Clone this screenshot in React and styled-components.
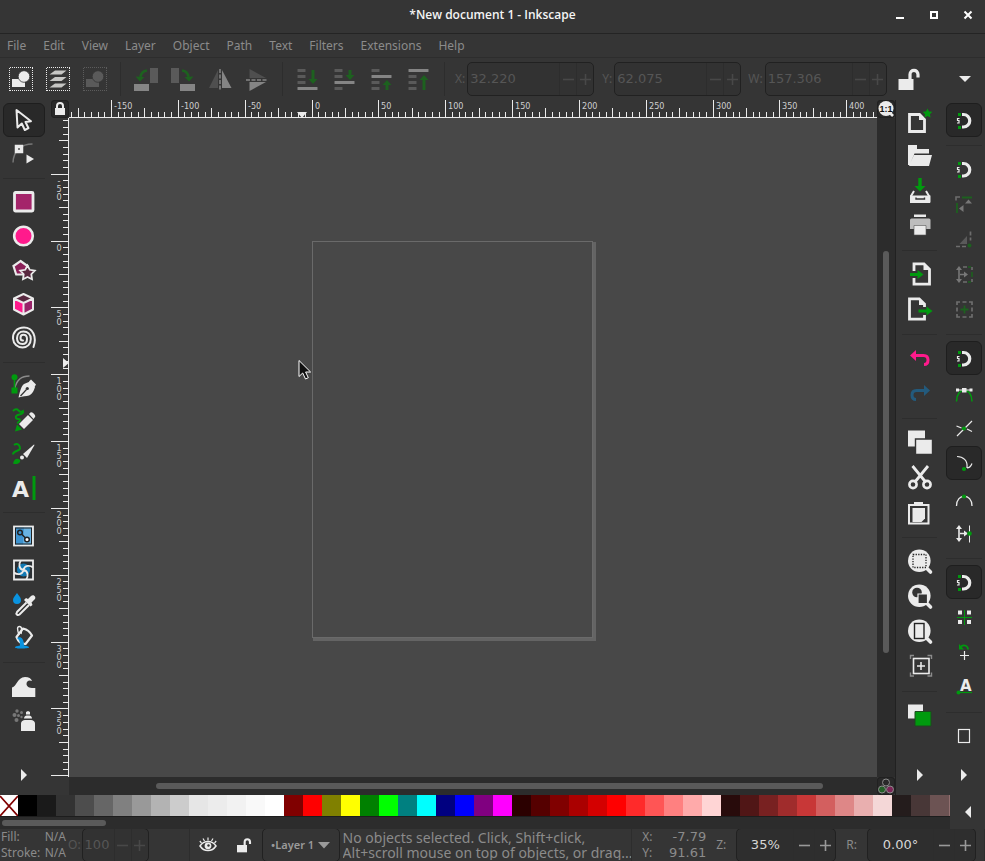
import React, { useLayoutEffect, useRef, useState } from "react";
import styled, { createGlobalStyle, css } from "styled-components";

const c = {
  chrome: "#353535",
  trough: "#2c2c2c",
  edge: "#212121",
  line: "#2d2d2d",
  canvas: "#484848",
  ink: "#ebebeb",
  text: "#8b8b8b",
  off: "#565656",
  green: "#009a0e",
  greenOff: "#1d611f",
  pink: "#ff1a8c",
  blue: "#0a93e0",
};
const ui = '"Noto Sans", "Open Sans", sans-serif';
const wide = '"DejaVu Sans", sans-serif';

const Global = createGlobalStyle`
  *, *::before, *::after { box-sizing: border-box; }
  body { margin: 0; background: ${c.chrome}; overflow: hidden; }
  button, input { font: inherit; color: inherit; margin: 0; padding: 0; border: 0; background: none; }
  svg { display: block; flex: none; }
`;

const Window = styled.div`
  display: flex;
  flex-direction: column;
  height: 100vh;
  background: ${c.chrome};
  color: ${c.text};
  font: 12px/16px ${ui};
`;

const TitleBar = styled.header`
  display: grid;
  grid-template-columns: 1fr auto 1fr;
  align-items: center;
  height: 34px;
  padding-bottom: 3px;
  border-bottom: 1px solid #242424;
  color: #f4f4f4;
`;
const Title = styled.h1`
  grid-column: 2;
  margin: 0;
  font: 600 12px/16px "Open Sans", ${ui};
`;
const WindowButtons = styled.div`
  display: flex;
  justify-content: flex-end;
`;
const WindowButton = styled.button`
  display: grid;
  place-items: center;
  width: 34px;
  height: 30px;
`;
const MenuBar = styled.nav`
  display: flex;
  align-items: center;
  gap: 17px;
  height: 24px;
  padding: 0 7px;
  border-bottom: 1px solid ${c.line};
`;
const MenuItem = styled.button`
  font-size: 12px;
  line-height: 16px;
`;
const OptionBar = styled.div`
  display: flex;
  align-items: center;
  height: 42px;
  padding-left: 2px;
`;
const OptionButton = styled.button`
  display: grid;
  place-items: center;
  flex: none;
  width: 37px;
  height: 34px;
`;
const BarRule = styled.div`
  flex: none;
  width: 1px;
  height: 34px;
  margin: 0 6px 0 7px;
  background: ${c.line};
`;
const Field = styled.label`
  display: flex;
  align-items: center;
  flex: none;
  gap: ${(p) => p.$gap || 2}px;
  margin-left: ${(p) => p.$left || 0}px;
  color: ${(p) => (p.$off ? c.off : c.text)};
`;
const SpinBox = styled.span`
  display: flex;
  width: ${(p) => p.$width}px;
  height: 34px;
  border: 1px solid ${c.edge};
  border-radius: 5px;
  background: ${(p) => (p.$off ? "#323232" : "#2e2e2e")};
  color: ${(p) => (p.$off ? c.off : "#d6d6d6")};
  font: 13px/16px ${wide};
`;
const SpinInput = styled.input`
  flex: 1;
  min-width: 0;
  padding: 0 2px;
  text-align: ${(p) => p.$align || "left"};
  outline: 0;
`;
const SpinStep = styled.button`
  display: grid;
  place-items: center;
  width: ${(p) => p.$step}px;
  border-left: 1px solid ${c.line};
  color: ${(p) => (p.$off ? "#484848" : "#999")};
`;
const MoreButton = styled.button`
  display: grid;
  place-items: center;
  width: 40px;
  height: 34px;
  margin-left: auto;
`;

const Main = styled.main`
  display: flex;
  flex: 1;
  min-height: 0;
`;
const ToolColumn = styled.div`
  display: flex;
  flex-direction: column;
  flex: none;
  width: ${(p) => p.$width}px;
  padding: ${(p) => p.$pad};
`;
const ToolButton = styled.button`
  display: grid;
  place-items: center;
  flex: none;
  height: 34px;
  margin-bottom: ${(p) => p.$gap}px;
  border: 1px solid transparent;
  border-radius: 6px;
  ${(p) =>
    p.$on &&
    css`
      background: #292929;
      border-color: #1e1e1e;
    `}
`;
const ColumnRule = styled.div`
  flex: none;
  height: 1px;
  margin: 7px 0 6px;
  background: ${c.line};
`;
const ExpandButton = styled.button`
  display: grid;
  place-items: center;
  height: 30px;
  margin: auto 0 5px;
`;

const Editor = styled.section`
  display: grid;
  flex: 1;
  min-width: 0;
  grid-template-columns: 18px 1fr 18px;
  grid-template-rows: 18px 1fr 18px;
  border-right: 1px solid ${c.edge};
`;
const CornerButton = styled.button`
  display: grid;
  place-items: center;
  border-radius: 4px;
  background: #292929;
  box-shadow: inset 0 0 0 1px ${c.edge};
`;
const RulerTop = styled.div`
  min-width: 0;
  overflow: hidden;
  border-bottom: 1px solid ${c.ink};
`;
const RulerLeft = styled.div`
  min-height: 0;
  overflow: hidden;
  border-right: 1px solid ${c.ink};
`;
const RulerText = styled.text`
  font: 9px "DejaVu Sans Condensed", "DejaVu Sans", sans-serif;
  fill: #cfcfcf;
`;
const Canvas = styled.div`
  position: relative;
  overflow: hidden;
  background: ${c.canvas};
`;
const Page = styled.div`
  position: absolute;
  left: 243px;
  top: 123px;
  width: 281px;
  height: 397px;
  border: 1px solid #6a6a6a;
  box-shadow: 2px 2px 0 1px #646464;
  background: ${c.canvas};
`;
const Pointer = styled.svg`
  position: absolute;
  left: 229px;
  top: 241px;
`;
const ScrollY = styled.div`
  display: flex;
  justify-content: center;
  background: ${c.trough};
`;
const ThumbY = styled.div`
  width: 6px;
  height: 61%;
  margin-top: 133px;
  border-radius: 3px;
  background: #5a5a5a;
`;
const ScrollX = styled.div`
  display: flex;
  align-items: center;
  background: ${c.trough};
`;
const ThumbX = styled.div`
  width: ${(p) => p.$width};
  height: 6px;
  margin-left: ${(p) => p.$left}px;
  border-radius: 3px;
  background: #5a5a5a;
`;
const PaletteBar = styled.div`
  display: flex;
`;
const PaletteArea = styled.div`
  flex: 1;
  min-width: 0;
`;
const Swatches = styled.div`
  display: flex;
  height: 22px;
  overflow: hidden;
  border-bottom: 1px solid #1d1d1d;
`;
const Swatch = styled.button`
  flex: none;
  width: ${(p) => (p.$none ? 18 : 19)}px;
  background: ${(p) => p.$color};
`;
const PaletteScroll = styled(ScrollX)`
  height: 12px;
`;
const PaletteMenu = styled.button`
  display: grid;
  place-items: center;
  width: 35px;
`;

const StatusBar = styled.footer`
  display: flex;
  align-items: center;
  height: 32px;
  overflow: hidden;
  font-size: 12px;
`;
const Pair = styled.dl`
  display: grid;
  grid-template-columns: auto 1fr;
  flex: none;
  width: ${(p) => p.$width}px;
  margin: 0 0 0 ${(p) => p.$left}px;
  line-height: 16px;
`;
const Term = styled.dt``;
const Value = styled.dd`
  margin: 0;
  text-align: right;
  font-family: ${(p) => (p.$wide ? wide : ui)};
  font-size: ${(p) => (p.$wide ? 13 : 12)}px;
`;
const StatusRule = styled.div`
  flex: none;
  width: 1px;
  height: 32px;
  margin-left: ${(p) => p.$left}px;
  background: ${c.line};
`;
const StatusButton = styled.button`
  display: grid;
  place-items: center;
  flex: none;
  width: 36px;
  height: 32px;
`;
const LayerButton = styled.button`
  display: flex;
  align-items: center;
  justify-content: center;
  gap: 4px;
  flex: none;
  width: 78px;
  height: 34px;
  border: 1px solid ${c.edge};
  border-radius: 5px;
  font: 600 11px/16px ${ui};
  color: #9a9a9a;
`;
const Message = styled.p`
  flex: 1;
  min-width: 0;
  margin: 0 0 0 3px;
  overflow: hidden;
  white-space: nowrap;
  font: 14px/15px ${ui};
`;

const Icon = ({ children, w = 24, h = 24, ...rest }) => (
  <svg width={w} height={h} viewBox={`0 0 ${w} ${h}`} fill="none" aria-hidden="true" {...rest}>
    {children}
  </svg>
);
const W = c.ink;
const G = c.green;
const GO = c.greenOff;
const D = "#5a5a5a";
const L = "#858585";

/* ---- option bar ---- */
const Dots = ({ color }) => (
  <path d="M1 .5h23M1 23.5h23M.5 1v23M23.5 1v23" stroke={color} strokeWidth="1" strokeDasharray="1 1" />
);
const SelectAll = ({ color = W, body = W }) => (
  <Icon>
    <Dots color={color} />
    <path d="M3 12h13v8H3z" fill={body} />
    <circle cx="15" cy="9.500" r="5.800" fill={body} stroke={c.chrome} strokeWidth=".8" />
  </Icon>
);
const SelectLayers = () => (
  <Icon>
    <Dots color={W} />
    <path d="M9 3.500h11.500l-5 4H3.500zM9 10h11.500l-5 4H3.500zM9 16.500h11.500l-5 4H3.500z" fill="#c6c6c4" />
  </Icon>
);
const RotateIcon = ({ flip }) => (
  <Icon>
    <g transform={flip ? "translate(24 0) scale(-1 1)" : undefined}>
      <path d="M16 1h8v15h-8z" fill={D} />
      <path d="M0 17h15v7H0z" fill={L} />
      <path d="M13 3.500C9 4 7 6 6.500 10" stroke={GO} strokeWidth="2.600" />
      <path d="M1.500 9.500l9 .5-4.500 4.500z" fill={GO} />
    </g>
  </Icon>
);
const FlipH = () => (
  <Icon>
    <path d="M1 21L10 3v18z" fill="#4f4f4f" />
    <path d="M23.500 21L14 3v18z" fill={L} />
    <path d="M12 2v22" stroke={L} strokeWidth="1.500" strokeDasharray="4 1.500" />
  </Icon>
);
const FlipV = () => (
  <Icon>
    <path d="M4.500 2v9H21z" fill="#4f4f4f" />
    <path d="M4.500 24v-9H21z" fill={L} />
    <path d="M1 13h22" stroke={L} strokeWidth="1.500" strokeDasharray="4 1.500" />
  </Icon>
);
const Order = ({ at, y1, y2 }) => {
  const dir = y2 > y1 ? 1 : -1;
  return (
    <Icon>
      {[0, 1, 2, 3].map((i) => (
        <rect key={i} x="1.500" y={2 + i * 6} width={i === at ? 20 : 8} height={3} rx=".5" fill={i === at ? L : D} />
      ))}
      <path d={`M17 ${y1}V${y2 - dir * 3}`} stroke={GO} strokeWidth="3" />
      <path d={`M12.500 ${y2 - dir * 5}h9L17 ${y2}z`} fill={GO} />
    </Icon>
  );
};
const OpenLock = ({ size = 24 }) => (
  <svg width={size} height={size} viewBox="0 0 24 24" fill="none" aria-hidden="true">
    <path d="M1.500 12h15v11h-15z" fill={W} />
    <path d="M13 12V7.500c0-5.500 8-5.500 8 0v3" stroke={W} strokeWidth="3.200" />
  </svg>
);
const ClosedLock = () => (
  <Icon w={14} h={16}>
    <path d="M2 7h10v7H2z" fill={W} />
    <path d="M4 7V5c0-4 6-4 6 0v2" stroke={W} strokeWidth="2" />
  </Icon>
);
const Triangle = ({ dir = "right" }) => (
  <Icon w={12} h={12}>
    <path d={{ right: "M3 0l6 6-6 6z", left: "M9 0L3 6l6 6z", down: "M0 3h12L6 9z" }[dir]} fill={W} />
  </Icon>
);

/* ---- tool box ---- */
const tools = [
  [
    ["Selector", <path d="M4.500 2l1 17.500 4.300-4 3 6.500 3.700-1.800-3-6.200 5.500-.8z" stroke={W} strokeWidth="2" strokeLinejoin="round" />],
    ["Node", <>
      <path d="M20.500 2C10 2 1.500 8 1 20.500" stroke="#777" strokeWidth="1.500" />
      <path d="M4.500 4.500h5v5h-5z" fill="#222" stroke={W} strokeWidth="3.500" />
      <path d="M14.500 12.500l7.500 4.500-7.500 4.500z" fill={W} />
    </>],
  ],
  [
    ["Rectangle", <rect x="2.500" y="2.500" width="18.500" height="18.500" rx="1" fill="#a4246a" stroke={W} strokeWidth="2.800" />],
    ["Ellipse", <circle cx="11.500" cy="12" r="9.300" fill={c.pink} stroke={W} strokeWidth="2.600" />],
    ["Star", <>
      <path d="M8.500 3l7 5-2.700 8.500H4.200L1.500 8z" fill="#8c2059" stroke={W} strokeWidth="2.200" />
      <path d="M15.500 7.500l2.300 4.300 5 .9-3.500 3.500.7 5-4.500-2.300-4.500 2.300.7-5-3.500-3.500 5-.9z" fill="#592940" stroke={W} strokeWidth="1.800" />
    </>],
    ["3D box", <>
      <path d="M11.500 2L21 6.500v11L11.500 22.500 2 17.500v-11z" fill="#592940" />
      <path d="M2 6.500l9.500 4.500v11.500L2 17.500z" fill={c.pink} />
      <path d="M21 6.500L11.500 11v11.500L21 17.500z" fill="#99256a" />
      <path d="M11.500 2L21 6.500v11L11.500 22.500 2 17.500v-11zM2 6.500l9.500 4.500L21 6.500M11.500 11v11" stroke={W} strokeWidth="2" strokeLinejoin="round" />
    </>],
    ["Spiral", <path d="M21.500 21C25 11 21 1.500 12 1.500 4.500 1.500 .7 7 1 12.500c.4 5.500 4.500 9 9.500 9 5 0 8.300-3.500 8.300-8.500S15.500 5.500 11.500 5.500 5 8.500 5 12.300s2.500 5.700 5.500 5.700 4.500-2.300 4.500-5-1.500-4.200-3.700-4.200-2.800 1.600-2.800 3.200 1 2.500 2.500 2.500" stroke={W} strokeWidth="2" strokeLinecap="round" />],
  ],
  [
    ["Pen", <>
      <path d="M3 14C4.500 6 10 2 17.500 2" stroke="#8b8b8b" strokeWidth="1.400" />
      <path d="M2.500 3v12" stroke={G} strokeWidth="1.600" />
      <circle cx="2.500" cy="3.200" r="3" fill={G} />
      <path d="M-.5 13.500h6v6h-6z" fill={G} />
      <path d="M6.500 23.500C8 18 9 12 12 10l6-2.500L23 13c-1.500 5-3 7-6 8.500-3 1-6 .5-10.500 2z" fill={W} />
      <path d="M8.500 22l6-6.500" stroke="#333" strokeWidth="1.200" />
      <circle cx="15.300" cy="14.500" r="1.600" fill="#333" />
      <path d="M17 7.500l2-2 5 5-1.500 2.500z" fill={W} />
    </>],
    ["Pencil", <>
      <path d="M1 3c2-2 4-2 5.500-.5S9 4.500 11 3c1 2-1 3-3.500 3.500S3 8 4 10s4 0 4 2-2 1.500-2.500 3.500" stroke={G} strokeWidth="1.900" />
      <path d="M7 16l9-9 5 5-9 9z" fill={W} />
      <path d="M17 6l1.500-1.500c1.500-1.500 6 3 4.500 4.500L21.500 11z" fill={W} />
      <path d="M5 16.500l5 5-7 2z" fill={G} />
    </>],
    ["Brush", <>
      <path d="M2 3c4-3 6 1 6 3.500S1 8.500 1 12.500" stroke={G} strokeWidth="2" />
      <path d="M11 12L22 2.500l.5.500L15 16z" fill={W} />
      <circle cx="10" cy="15.500" r="2" fill={W} />
      <path d="M1 21.500C2 17 5 15.500 8 18c1 3-3 5-7 3.500z" fill={G} />
    </>],
    ["Text", <>
      <text x="0" y="21" fill={W} fontFamily="DejaVu Sans" fontWeight="700" fontSize="22">A</text>
      <path d="M20.500 0h3v24h-3z" fill={G} />
    </>],
  ],
  [
    ["Gradient", <>
      <path d="M2 2.500h19v19H2z" fill="#3e93cf" />
      <path d="M12 2.500h9v19H11z" fill="#69b3e2" />
      <rect x="2" y="2.500" width="19" height="19" stroke={W} strokeWidth="1.800" />
      <rect x="3.500" y="4" width="16" height="16" stroke="#222" />
      <path d="M8 8.500l7 7" stroke="#222" strokeWidth="1.400" />
      <circle cx="8" cy="8.500" r="2.300" fill="#3e93cf" stroke="#222" strokeWidth="1.500" />
      <circle cx="15" cy="15.500" r="2.300" fill="#fff" stroke="#222" strokeWidth="1.500" />
    </>],
    ["Mesh", <>
      <path d="M2 2.500h19v19H2z" fill="#2a2f33" />
      <circle cx="11.500" cy="12" r="6.500" fill={c.blue} opacity=".75" />
      <path d="M2 2.500h19v19H2zM11.500 12C6.500 11 6.500 5.500 9 2.500M11.500 12c5 1 5 6.500 2.500 9.500M11.500 12c1-5 6.500-5 9.500-2.500M11.500 12c-1 5-6.500 5-9.500 2.500" stroke={W} strokeWidth="1.800" />
    </>],
    ["Dropper", <>
      <path d="M5 1c2 3 4 4.500 4 7a4 4 0 0 1-8 0c0-2.500 2-4 4-7z" fill={c.blue} />
      <path d="M14.500 10.500L5 20c-1.500 2 .5 4 2.500 2.500l9.500-9.500" stroke={W} strokeWidth="2" />
      <path d="M12 8l2-2 2 1 3-3c2.500-2.500 6 1 3.500 3.500l-3 3 1 2.500-2 1.500z" fill={W} />
    </>],
    ["Paint bucket", <>
      <path d="M11 2.500c4 1 7 3 9 7l-6.500 8.500C9 18 6 15 4.500 11z" stroke={W} strokeWidth="2.200" strokeLinejoin="round" />
      <path d="M7 9C5 3 5 .5 7.500 .5S10 4 9 8" stroke={W} strokeWidth="1.400" />
      <path d="M5 12c3-2 7-.5 7 7.500 3 .3 5 .8 5 2s-14 1.500-14 0c0-1 2-1.500 5-2 0-4-1-6-3-7.500z" fill={c.blue} />
    </>],
  ],
  [
    ["Tweak", <path d="M0 23V13.500c5-1 5-10 13-10.500 4 0 6 1.500 7 4-3-1.500-5.500 0-5.500 3 0 2.500 3 4.500 8.800 4v9z" fill={W} />],
    ["Spray", <>
      <path d="M9 23V15.500c0-2 2-3.500 4-3.500h6c2 0 4 1.500 4 3.500V23zM12 10.500c0-2.500 2-3 4-3s4 .5 4 3zM14 6.500V4l2-1 2 1v2.500z" fill={W} />
      <g fill="#777">
        <circle cx="5" cy="3" r="1.700" /><circle cx="2.500" cy="7" r="2" /><circle cx="6.500" cy="7.500" r="1.500" />
        <circle cx="4.500" cy="12" r="2" /><circle cx="9.500" cy="4.500" r="1.500" /><circle cx="9.500" cy="9" r="1.200" />
      </g>
    </>],
  ],
];

/* ---- command column ---- */
const Lens = ({ children }) => (
  <>
    <path d="M18 18.500l4.500 4.500" stroke={W} strokeWidth="3.600" strokeLinecap="round" />
    <circle cx="11.300" cy="11.800" r="11.300" fill={W} />
    {children}
  </>
);
const commands = [
  [
    ["New", <>
      <path d="M1.500 6.500h10l5 5v12h-15z" stroke={W} strokeWidth="2.800" />
      <path d="M11 6v6h6z" fill={W} />
      <path d="M19.500 .5l1.500 3 3.300.3-2.400 2.400.7 3.300-3.100-1.600-3.100 1.600.7-3.300-2.400-2.400 3.300-.3z" fill={G} />
    </>],
    ["Open", <path d="M0 2h9v4h12v4.500H6.500L1.500 22H0zM6 12h18l-3 11H1z" fill={W} />],
    ["Save", <>
      <path d="M12 0v9" stroke={G} strokeWidth="3.400" />
      <path d="M6.500 8h11L12 13.500z" fill={G} />
      <path d="M6 13L3 18v6h18v-6l-3-5" stroke={W} strokeWidth="2" />
      <path d="M2 17.500h20.500v7H2z" fill={W} />
      <path d="M8 19.500v1.500h8.500v-1.500" stroke="#333" strokeWidth="1.400" />
    </>],
    ["Print", <>
      <path d="M6 1.500h12V4H6z" fill={W} />
      <path d="M2 7q0-1.500 1.500-1.500h17.500q1.500 0 1.500 1.500v9H2z" fill="#bdbdbd" />
      <path d="M6 12.500h12V22H6z" fill={W} stroke="#555" strokeWidth=".6" />
    </>],
  ],
  [
    ["Import", <>
      <path d="M6 9V1.800h10l5.500 5.500v14.900H6V16" stroke={W} strokeWidth="2.800" />
      <path d="M15.500 2v6h6z" fill={W} />
      <path d="M2 12.500h8" stroke={G} strokeWidth="3" />
      <path d="M9.500 8l6 4.500-6 4.500z" fill={G} />
    </>],
    ["Export", <>
      <path d="M16.500 10V7l-5.300-5.200H1.500v20.400h15V18" stroke={W} strokeWidth="2.800" />
      <path d="M11 2v6h6z" fill={W} />
      <path d="M10.500 14h9" stroke={G} strokeWidth="3" />
      <path d="M18.500 9.500l6 4.500-6 4.500z" fill={G} />
    </>],
  ],
  [
    ["Undo", <>
      <path d="M7 9.500h8.500c3 0 4.500 2 4.500 4.500 0 3-1.500 4.500-4 4.500" stroke={c.pink} strokeWidth="3" />
      <path d="M8 4v11L2 9.500z" fill={c.pink} />
    </>],
    ["Redo", <>
      <path d="M17 9.500H8.500C5.500 9.500 4 11.500 4 14c0 3 1.500 4.500 4 4.500" stroke="#235a7c" strokeWidth="3" />
      <path d="M16 4v11l6-5.500z" fill="#235a7c" />
    </>],
  ],
  [
    ["Copy", <>
      <path d="M0 .5h17v16H0z" fill={W} />
      <path d="M7.500 9h17v15.500h-17z" fill={W} stroke={c.chrome} strokeWidth="1.400" />
    </>],
    ["Cut", <>
      <path d="M4.500 1L18 17.500M20 1L6.500 17.500" stroke={W} strokeWidth="2.800" />
      <circle cx="5" cy="19.500" r="3.600" stroke={W} strokeWidth="2.600" />
      <circle cx="19" cy="19.500" r="3.600" stroke={W} strokeWidth="2.600" />
    </>],
    ["Paste", <>
      <path d="M1 5h19.500v18.500H1z" stroke={W} strokeWidth="2" />
      <path d="M6 2h9v4H6z" fill={W} />
      <path d="M4.500 8h12.500v10.500l-3.500 3.500h-9z" fill={W} />
    </>],
  ],
  [
    ["Zoom selection", <Lens><rect x="5" y="5.500" width="13" height="13" stroke="#222" strokeWidth="1.300" strokeDasharray="1.300 1.300" /></Lens>],
    ["Zoom drawing", <Lens>
      <circle cx="9" cy="8.500" r="4.800" fill="#333" />
      <path d="M10 10h9.500v9.500H10z" fill="#333" stroke={W} strokeWidth="1.200" />
    </Lens>],
    ["Zoom page", <Lens><rect x="6.500" y="4.500" width="9.500" height="15" stroke="#222" strokeWidth="1.400" /></Lens>],
    ["Zoom centre", <>
      <path d="M2.500 5V1.500H6M19.500 1.500H23.500V5M23.500 18.500V22H19.500M6 22H2.500v-3.500" stroke="#8b8b8b" strokeWidth="1.400" />
      <rect x="5.500" y="4.500" width="15.500" height="15" stroke={W} strokeWidth="1.600" />
      <path d="M13 8v8M9 12h8" stroke={W} strokeWidth="1.500" />
    </>],
  ],
  [
    ["Fill and stroke", <>
      <path d="M0 1.500h15v14H0z" fill={W} />
      <path d="M7 8.500h16v14.500H7z" fill={G} stroke="#1c4a1e" strokeWidth="1" />
    </>],
  ],
];

/* ---- snap column ---- */
const magnet = (
  <>
    <path d="M10 6.500h1.500a6 6 0 0 1 0 12.500H10" stroke={W} strokeWidth="3.200" />
    <path d="M6 5h3v3H6zM6 18h3v3H6z" fill={G} />
    <path d="M7.500 10.500H5.500v2h1.500v2.500H5" stroke={W} strokeWidth="1.200" />
  </>
);
const moveArrow = (color) => (
  <>
    <path d="M7 6v13M8 12.500h5" stroke={color} strokeWidth="1.600" />
    <path d="M4 8l3-4 3 4zM4 17l3 4 3-4zM12 9.500l4 3-4 3z" fill={color} />
  </>
);
const snaps = [
  [["Snap", magnet, true]],
  [
    ["Snap bounding boxes", magnet],
    ["Snap edges", <>
      <path d="M10 5.500h10M5 11v10" stroke={GO} strokeWidth="1.800" />
      <path d="M4 8.500V5h4" stroke="#6d6d6d" strokeWidth="1.600" />
      <path d="M13 11.500l3.500-4 3.500 4zM11.500 13v7l-4.500-3.500z" fill="#777" />
    </>],
    ["Snap corners", <>
      <path d="M15 9v8H7.500z" fill={D} />
      <path d="M18.500 4.500v9M4 19.500h11" stroke="#6d6d6d" strokeWidth="1.700" strokeDasharray="4 2" />
      <circle cx="17.500" cy="18.500" r="2" fill={GO} />
    </>],
    ["Snap edge midpoints", <>
      {moveArrow("#777")}
      <path d="M11 5h4M11 20h4M20 5v3M20 17v3" stroke="#6d6d6d" strokeWidth="1.600" />
      <path d="M16 5h3M20 10v5M16 20h3" stroke={GO} strokeWidth="1.600" />
    </>],
    ["Snap centres", <>
      <path d="M8 5H5v3M5 10.500v4M5 17v3h3M10.500 20h4M17 20h3v-3M20 14.500v-4M20 8V5h-3M14.500 5h-4" stroke="#6d6d6d" strokeWidth="1.700" />
      <path d="M12.500 8.500v8M8.500 12.500h8" stroke={GO} strokeWidth="1.800" />
    </>],
  ],
  [
    ["Snap nodes", magnet, true],
    ["Snap paths", <>
      <path d="M4.500 20.500c0-15 15.500-15 15.500 0" stroke={G} strokeWidth="1.500" />
      <path d="M6 9h13" stroke={W} />
      <path d="M4 7.500h3v3H4zM17.500 7.500h3v3h-3zM10 7h4.500v4.500H10z" fill={W} />
    </>],
    ["Snap intersections", <>
      <path d="M5 20L20 5M4.500 10l5 2M15 13l5 2.500" stroke={W} strokeWidth="1.200" />
      <circle cx="12" cy="12.500" r="2.100" fill={G} />
    </>],
    ["Snap cusp nodes", <>
      <path d="M5 5.500c6 0 11 4 10 11.500M15 17c3 0 4-2 5-4.500" stroke={W} strokeWidth="1.200" />
      <circle cx="12" cy="18" r="2.100" fill={G} />
    </>, true],
    ["Snap smooth nodes", <>
      <path d="M4.500 20c0-13 15.500-13 15.500 0" stroke={W} strokeWidth="1.300" />
      <circle cx="12" cy="10.500" r="2.100" fill={G} />
    </>],
    ["Snap line midpoints", <>
      {moveArrow(W)}
      <path d="M17.500 4.500v17" stroke={W} strokeWidth="1" />
      <circle cx="17.500" cy="12.500" r="2.300" fill={G} />
    </>],
  ],
  [
    ["Snap others", magnet, true],
    ["Snap object centres", <>
      <path d="M6 5.500h4v4H6zM15 5.500h4v4h-4zM6 15h4v4H6zM15 15h4v4h-4z" fill={W} />
      <path d="M12.500 5v15M5 12.500h15" stroke={G} />
    </>],
    ["Snap rotation centres", <>
      <path d="M12.500 11v9M8 15.500h9" stroke={W} strokeWidth="1.200" />
      <path d="M9 6.500c3-2 7-1 7 3" stroke={G} strokeWidth="1.800" />
      <path d="M7 4v5.500h5z" fill={G} />
    </>],
    ["Snap text baselines", <>
      <text x="8" y="15.500" fill={W} fontFamily="DejaVu Sans" fontWeight="700" fontSize="15">A</text>
      <path d="M6 17.500h14" stroke={G} strokeWidth="1.200" />
      <circle cx="6.500" cy="17.500" r="2" fill={G} />
    </>],
  ],
  [["Snap page border", <rect x="6.500" y="5.500" width="11" height="13" stroke={W} strokeWidth="1.200" />]],
];

/* screen pixels per document unit at the current zoom */
const UNIT = 1.337;
const tickLength = (v) => (v % 50 === 0 ? 17 : v % 25 === 0 ? 9 : 5);

function useTicks(origin, side) {
  const ref = useRef(null);
  const [size, setSize] = useState(0);
  useLayoutEffect(() => {
    const measure = () => setSize(ref.current[side]);
    measure();
    window.addEventListener("resize", measure);
    return () => window.removeEventListener("resize", measure);
  }, [side]);
  const ticks = [];
  for (let v = Math.ceil(-origin / UNIT / 5) * 5; v * UNIT + origin < size; v += 5) {
    ticks.push({ v, at: Math.floor(origin + v * UNIT), len: tickLength(v) });
  }
  return [ref, ticks, ticks.filter((t) => t.v % 50 === 0 && t.at < size - 20)];
}

function HorizontalRuler() {
  const [ref, ticks, labels] = useTicks(243, "clientWidth");
  return (
    <RulerTop ref={ref}>
      <svg width="100%" height="17" aria-hidden="true">
        {ticks.map(({ v, at, len }) => <rect key={v} x={at} y={17 - len} width="1" height={len} fill={c.ink} />)}
        {labels.map(({ v, at }) => <RulerText key={v} x={at + 3} y="9">{v}</RulerText>)}
        <path d="M228 12h10l-5 6z" fill={c.ink} />
      </svg>
    </RulerTop>
  );
}
function VerticalRuler() {
  const [ref, ticks, labels] = useTicks(123, "clientHeight");
  return (
    <RulerLeft ref={ref}>
      <svg width="17" height="100%" aria-hidden="true">
        {ticks.map(({ v, at, len }) => <rect key={v} x={17 - len} y={at} width={len} height="1" fill={c.ink} />)}
        {labels.map(({ v, at }) =>
          String(v).split("").map((d, i) => (
            <RulerText key={v + "/" + i} x="8" y={at + 10 + i * 8} textAnchor="middle">{d}</RulerText>
          ))
        )}
        <path d="M12 240v10l6-5z" fill={c.ink} />
      </svg>
    </RulerLeft>
  );
}

function Spin({ label, value, width, step = 17, off, align, left, gap }) {
  return (
    <Field $off={off} $left={left} $gap={gap}>
      {label}:
      <SpinBox $width={width} $off={off}>
        <SpinInput defaultValue={value} $align={align} />
        <SpinStep type="button" aria-label="Decrease" $step={step} $off={off}>
          <Icon w={11} h={11}><path d="M0 5.500h11" stroke="currentColor" strokeWidth="1.600" /></Icon>
        </SpinStep>
        <SpinStep type="button" aria-label="Increase" $step={step} $off={off}>
          <Icon w={11} h={11}><path d="M0 5.500h11M5.500 0v11" stroke="currentColor" strokeWidth="1.600" /></Icon>
        </SpinStep>
      </SpinBox>
    </Field>
  );
}

function Column({ groups, width, pad, gap, active }) {
  return (
    <ToolColumn $width={width} $pad={pad}>
      {groups.map((group, g) => (
        <React.Fragment key={g}>
          {g > 0 && <ColumnRule />}
          {group.map(([name, art, on]) => (
            <ToolButton key={name} aria-label={name} $gap={gap} $on={on || name === active}>
              <Icon overflow="visible">{art}</Icon>
            </ToolButton>
          ))}
        </React.Fragment>
      ))}
      <ExpandButton aria-label="More"><Triangle /></ExpandButton>
    </ToolColumn>
  );
}

const menus = ["File", "Edit", "View", "Layer", "Object", "Path", "Text", "Filters", "Extensions", "Help"];
const swatches = (
  "000000 1a1a1a 333333 4d4d4d 666666 808080 999999 b3b3b3 cccccc e6e6e6 ececec f2f2f2 f9f9f9 ffffff " +
  "800000 ff0000 808000 ffff00 008000 00ff00 008080 00ffff 000080 0000ff 800080 ff00ff " +
  "2b0000 550000 800000 aa0000 d40000 ff0000 ff2a2a ff5555 ff8080 ffaaaa ffd5d5 " +
  "280b0b 501616 782121 a02c2c c83737 d35f5f de8787 e9afaf f4d7d7 241c1c 483737 6c5353 916f6f"
).split(" ");

export default function App() {
  return (
    <>
      <Global />
      <Window>
        <TitleBar>
          <Title>*New document 1 - Inkscape</Title>
          <WindowButtons>
            <WindowButton aria-label="Minimize"><Icon w={10} h={10}><path d="M1 8h8" stroke="#fff" strokeWidth="2" /></Icon></WindowButton>
            <WindowButton aria-label="Maximize"><Icon w={10} h={10}><path d="M2 2h6v6H2z" stroke="#fff" strokeWidth="2" /></Icon></WindowButton>
            <WindowButton aria-label="Close"><Icon w={10} h={10}><path d="M1.500 1.500l7 7M8.500 1.500l-7 7" stroke="#fff" strokeWidth="2" /></Icon></WindowButton>
          </WindowButtons>
        </TitleBar>
        <MenuBar>
          {menus.map((m) => <MenuItem key={m}>{m}</MenuItem>)}
        </MenuBar>
        <OptionBar>
          <OptionButton aria-label="Select all"><SelectAll /></OptionButton>
          <OptionButton aria-label="Select all in all layers"><SelectLayers /></OptionButton>
          <OptionButton aria-label="Deselect"><SelectAll color="#5c5c5c" body={D} /></OptionButton>
          <BarRule />
          <OptionButton aria-label="Rotate left"><RotateIcon /></OptionButton>
          <OptionButton aria-label="Rotate right"><RotateIcon flip /></OptionButton>
          <OptionButton aria-label="Flip horizontally"><FlipH /></OptionButton>
          <OptionButton aria-label="Flip vertically"><FlipV /></OptionButton>
          <BarRule />
          <OptionButton aria-label="Lower to bottom"><Order at={3} y1={3} y2={17} /></OptionButton>
          <OptionButton aria-label="Lower"><Order at={2} y1={3} y2={13} /></OptionButton>
          <OptionButton aria-label="Raise"><Order at={1} y1={23} y2={13} /></OptionButton>
          <OptionButton aria-label="Raise to top"><Order at={0} y1={23} y2={8} /></OptionButton>
          <BarRule />
          <Spin label="X" value="32.220" width={127} off left={4} />
          <Spin label="Y" value="62.075" width={127} off left={8} />
          <Spin label="W" value="157.306" width={122} off left={7} />
          <Field as="div" $left={4}><OptionButton aria-label="Lock ratio"><OpenLock /></OptionButton></Field>
          <MoreButton aria-label="More options"><Triangle dir="down" /></MoreButton>
        </OptionBar>

        <Main>
          <Column groups={tools} width={51} pad="3px 6px 0 3px" gap={0} active="Selector" />
          <Editor>
            <CornerButton aria-label="Lock guides"><ClosedLock /></CornerButton>
            <HorizontalRuler />
            <CornerButton aria-label="Zoom 1:1">
              <Icon w={18} h={18}>
                <path d="M12 12l4 4" stroke={W} strokeWidth="2.600" />
                <circle cx="9" cy="8.500" r="7.500" fill={W} />
                <text x="9" y="12" textAnchor="middle" fill="#111" fontFamily="Liberation Sans" fontWeight="700" fontSize="9">1:1</text>
              </Icon>
            </CornerButton>
            <VerticalRuler />
            <Canvas>
              <Page />
              <Pointer width="14" height="22" viewBox="0 0 14 22">
                <path d="M1 1.500v16l3.700-3.500 2.800 6 2.800-1.300-2.700-5.700h5z" fill="#111" stroke="#fff" strokeWidth="1" />
              </Pointer>
            </Canvas>
            <ScrollY><ThumbY /></ScrollY>
            <div />
            <ScrollX><ThumbX $left={87} $width="667px" /></ScrollX>
            <CornerButton aria-label="Colour management">
              <Icon w={18} h={18}>
                <circle cx="9" cy="5.500" r="3.500" stroke="#8b8b8b" />
                <circle cx="5" cy="12.500" r="3.500" fill="#245f27" stroke="#8b8b8b" />
                <circle cx="13" cy="12.500" r="3.500" fill="#7c2657" stroke="#8b8b8b" />
              </Icon>
            </CornerButton>
          </Editor>
          <Column groups={commands} width={49} pad="3px 8px 0 6px" gap={1} />
          <Column groups={snaps} width={40} pad="3px 3px 0 1px" gap={1} />
        </Main>

        <PaletteBar>
          <PaletteArea>
            <Swatches>
              <Swatch $none $color="#fff" aria-label="No colour">
                <Icon w={18} h={21}><path d="M0 1l18 20M18 1L0 21" stroke="#800000" strokeWidth="1.800" /></Icon>
              </Swatch>
              {swatches.map((s, i) => <Swatch key={i} $color={"#" + s} aria-label={"#" + s} />)}
            </Swatches>
            <PaletteScroll><ThumbX $left={2} $width="104px" /></PaletteScroll>
          </PaletteArea>
          <PaletteMenu aria-label="Palette menu"><Triangle dir="left" /></PaletteMenu>
        </PaletteBar>

        <StatusBar>
          <Pair $left={1} $width={65}>
            <Term>Fill:</Term><Value>N/A</Value>
            <Term>Stroke:</Term><Value>N/A</Value>
          </Pair>
          <Spin label="O" value="100" width={67} off left={2} gap={1} />
          <StatusRule $left={40} />
          <StatusButton aria-label="Layer visibility">
            <Icon w={18} h={16}>
              <path d="M1 9c4-6 12-6 16 0-4 6-12 6-16 0z" stroke={W} strokeWidth="1.500" />
              <circle cx="9" cy="8.800" r="3.400" fill={W} />
              <circle cx="9.500" cy="8.500" r="1.200" fill="#333" />
              <path d="M9 3.500V.5M5.500 4L4 1.500M12.500 4L14 1.500M2.500 6L.8 4M15.500 6l1.700-2" stroke={W} strokeWidth="1.200" />
            </Icon>
          </StatusButton>
          <StatusButton aria-label="Layer lock"><OpenLock size={16} /></StatusButton>
          <LayerButton>
            •Layer 1
            <Icon w={12} h={8}><path d="M0 1h12L6 7.500z" fill="#9a9a9a" /></Icon>
          </LayerButton>
          <Message>
            No objects selected. Click, Shift+click,
            <br />
            Alt+scroll mouse on top of objects, or drag...
          </Message>
          <StatusRule $left={0} />
          <Pair $left={10} $width={64}>
            <Term>X:</Term><Value $wide>-7.79</Value>
            <Term>Y:</Term><Value $wide>91.61</Value>
          </Pair>
          <Spin label="Z" value="35%" width={100} step={21} align="center" left={10} gap={10} />
          <Spin label="R" value="0.00°" width={109} step={21} align="center" left={10} gap={10} />
          <StatusRule $left={8} />
        </StatusBar>
      </Window>
    </>
  );
}
